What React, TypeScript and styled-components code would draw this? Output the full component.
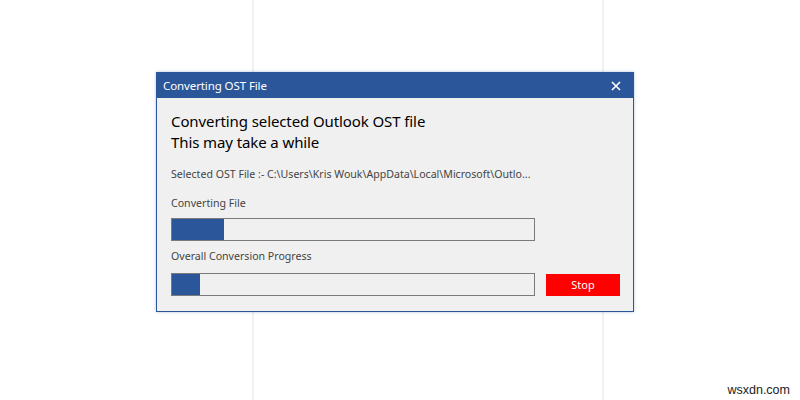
import styled, { createGlobalStyle } from 'styled-components'

const GlobalStyle = createGlobalStyle`
    html, body {
        margin: 0;
        padding: 0;
        width: 800px;
        height: 400px;
        overflow: hidden;
        background-color: #ffffff;
        background-image:
            linear-gradient(#f1f1f1, #f1f1f1),
            linear-gradient(#f1f1f1, #f1f1f1);
        background-size: 2px 100%, 2px 100%;
        background-position: 252px 0, 602px 0;
        background-repeat: no-repeat;
        font-family: "Noto Sans", "Open Sans", sans-serif;
    }
`

const Page = styled.div`
    position: relative;
    width: 800px;
    height: 400px;
    padding: 72px 0 0 156px;
    box-sizing: border-box;
`

const Window = styled.div`
    width: 478px;
    height: 240px;
    box-sizing: border-box;
    border: 1px solid #2b579a;
    background-color: #f0f0f0;
    box-shadow: 0 0 3px rgba(43, 87, 154, 0.35);
    display: flex;
    flex-direction: column;
`

const TitleBar = styled.div`
    height: 25px;
    background-color: #2b579a;
    display: flex;
    align-items: center;
    justify-content: space-between;
    padding: 0 10px 0 6px;
    color: #ffffff;
    font-size: 11.5px;
    letter-spacing: -0.1px;
`

const CloseButton = styled.div`
    width: 14px;
    height: 14px;
    display: flex;
    align-items: center;
    justify-content: center;
`

const Body = styled.div`
    padding: 13px 12px 0 14px;
    display: flex;
    flex-direction: column;
`

const Heading = styled.div`
    font-size: 15px;
    line-height: 21px;
    letter-spacing: -0.1px;
    color: #000000;
`

const Label = styled.div<{ $top: number }>`
    margin-top: ${p => p.$top}px;
    font-size: 10.6px;
    line-height: 14px;
    color: #444444;
    white-space: nowrap;
`

const Row = styled.div<{ $top: number }>`
    margin-top: ${p => p.$top}px;
    display: flex;
    align-items: center;
    gap: 11px;
`

const Track = styled.div`
    width: 364px;
    height: 23px;
    flex-shrink: 0;
    box-sizing: border-box;
    border: 1px solid #7a7a7a;
    background-color: #f0f0f0;
    display: flex;
`

const Fill = styled.div`
    height: 100%;
    background-color: #2b579a;
`

const StopButton = styled.button`
    width: 74px;
    height: 22px;
    flex-shrink: 0;
    border: none;
    background-color: #ff0000;
    color: #ffffff;
    font-family: "Noto Sans", "Open Sans", sans-serif;
    font-size: 11px;
    padding: 0;
`

const Watermark = styled.div`
    position: absolute;
    right: 10px;
    bottom: 3px;
    font-family: "Liberation Sans", Arial, sans-serif;
    font-size: 12.5px;
    color: #222222;
`

const App = () => {
    const fileProgress = 52
    const overallProgress = 28

    return (
        <>
            <GlobalStyle />
            <Page>
                <Window>
                    <TitleBar>
                        <span>Converting OST File</span>
                        <CloseButton>
                            <svg width="10" height="10" viewBox="0 0 10 10">
                                <path d="M1 1 L9 9 M9 1 L1 9" stroke="#ffffff" strokeWidth="1.6" />
                            </svg>
                        </CloseButton>
                    </TitleBar>
                    <Body>
                        <Heading>
                            Converting selected Outlook OST file<br />
                            This may take a while
                        </Heading>
                        <Label $top={14}>Selected OST File :- C:\Users\Kris Wouk\AppData\Local\Microsoft\Outlo...</Label>
                        <Label $top={15}>Converting File</Label>
                        <Row $top={8}>
                            <Track><Fill style={{ width: fileProgress }} /></Track>
                        </Row>
                        <Label $top={8}>Overall Conversion Progress</Label>
                        <Row $top={10}>
                            <Track><Fill style={{ width: overallProgress }} /></Track>
                            <StopButton>Stop</StopButton>
                        </Row>
                    </Body>
                </Window>
                <Watermark>wsxdn.com</Watermark>
            </Page>
        </>
    )
}

export default App
